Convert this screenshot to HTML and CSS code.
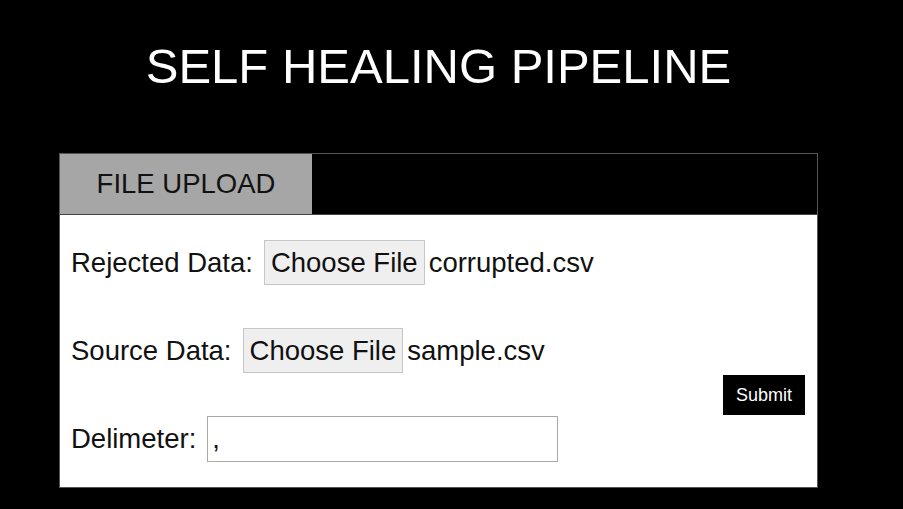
FILE: index.html
```html
<!DOCTYPE html>
<html lang="en">
<head>
<meta charset="utf-8">
<title>Self Healing Pipeline</title>
<link rel="stylesheet" href="styles.css">
</head>
<body>
<div class="page">
  <h1 class="title">SELF HEALING PIPELINE</h1>
  <section class="card">
    <div class="tabs">
      <div class="tab active">FILE UPLOAD</div>
    </div>
    <form class="panel">
      <div class="fields">
        <div class="row">
          <label class="label">Rejected Data:</label>
          <span class="file">
            <button type="button" class="file-btn">Choose File</button>
            <span class="file-name">corrupted.csv</span>
          </span>
        </div>
        <div class="row">
          <label class="label">Source Data:</label>
          <span class="file">
            <button type="button" class="file-btn">Choose File</button>
            <span class="file-name">sample.csv</span>
          </span>
        </div>
        <div class="row">
          <label class="label">Delimeter:</label>
          <input class="text-input" type="text" value=",">
        </div>
      </div>
      <button type="button" class="submit">Submit</button>
    </form>
  </section>
</div>
</body>
</html>
```

FILE: styles.css
```css
html, body {
  margin: 0;
  padding: 0;
  background: #000;
}

body {
  font-family: "Liberation Sans", Arial, sans-serif;
  color: #111;
}

.page {
  width: 759px;
  padding: 38px 0 0 59px;
}

.title {
  margin: 0 0 59px;
  height: 56px;
  line-height: 56px;
  font-size: 49px;
  font-weight: normal;
  text-align: center;
  color: #fff;
}

.card {
  border: 1px solid #555;
  background: #000;
}

.tabs {
  display: flex;
  height: 60px;
  border-bottom: 1px solid #444;
}

.tab {
  width: 252px;
  display: flex;
  align-items: center;
  justify-content: center;
  font-size: 27.5px;
  color: #111;
}

.tab.active {
  background: #a6a6a6;
}

.panel {
  display: flex;
  justify-content: space-between;
  height: 272px;
  box-sizing: border-box;
  padding: 25px 12px 0 11px;
  background: #fff;
}

.fields {
  display: flex;
  flex-direction: column;
  gap: 43px;
}

.row {
  display: flex;
  align-items: center;
  gap: 11px;
  font-size: 27.5px;
  color: #111;
}

.row:last-child {
  gap: 11px;
}

.label {
  white-space: nowrap;
}

.file {
  display: flex;
  align-items: center;
  gap: 4px;
}

.file-btn {
  height: 45px;
  padding: 0 6px;
  border: 1px solid #c6c6c6;
  border-radius: 0;
  background: #efefef;
  font-family: inherit;
  font-size: 27.5px;
  color: #111;
}

.file-name {
  white-space: nowrap;
}

.text-input {
  width: 351px;
  height: 46px;
  box-sizing: border-box;
  padding: 0 4px;
  border: 1px solid #a8a8a8;
  border-radius: 0;
  background: #fff;
  font-family: inherit;
  font-size: 27.5px;
  color: #111;
  outline: none;
}

.submit {
  align-self: flex-end;
  margin-bottom: 72px;
  width: 82px;
  height: 40px;
  padding: 0;
  border: none;
  background: #000;
  color: #fff;
  font-family: inherit;
  font-size: 18px;
}
```
